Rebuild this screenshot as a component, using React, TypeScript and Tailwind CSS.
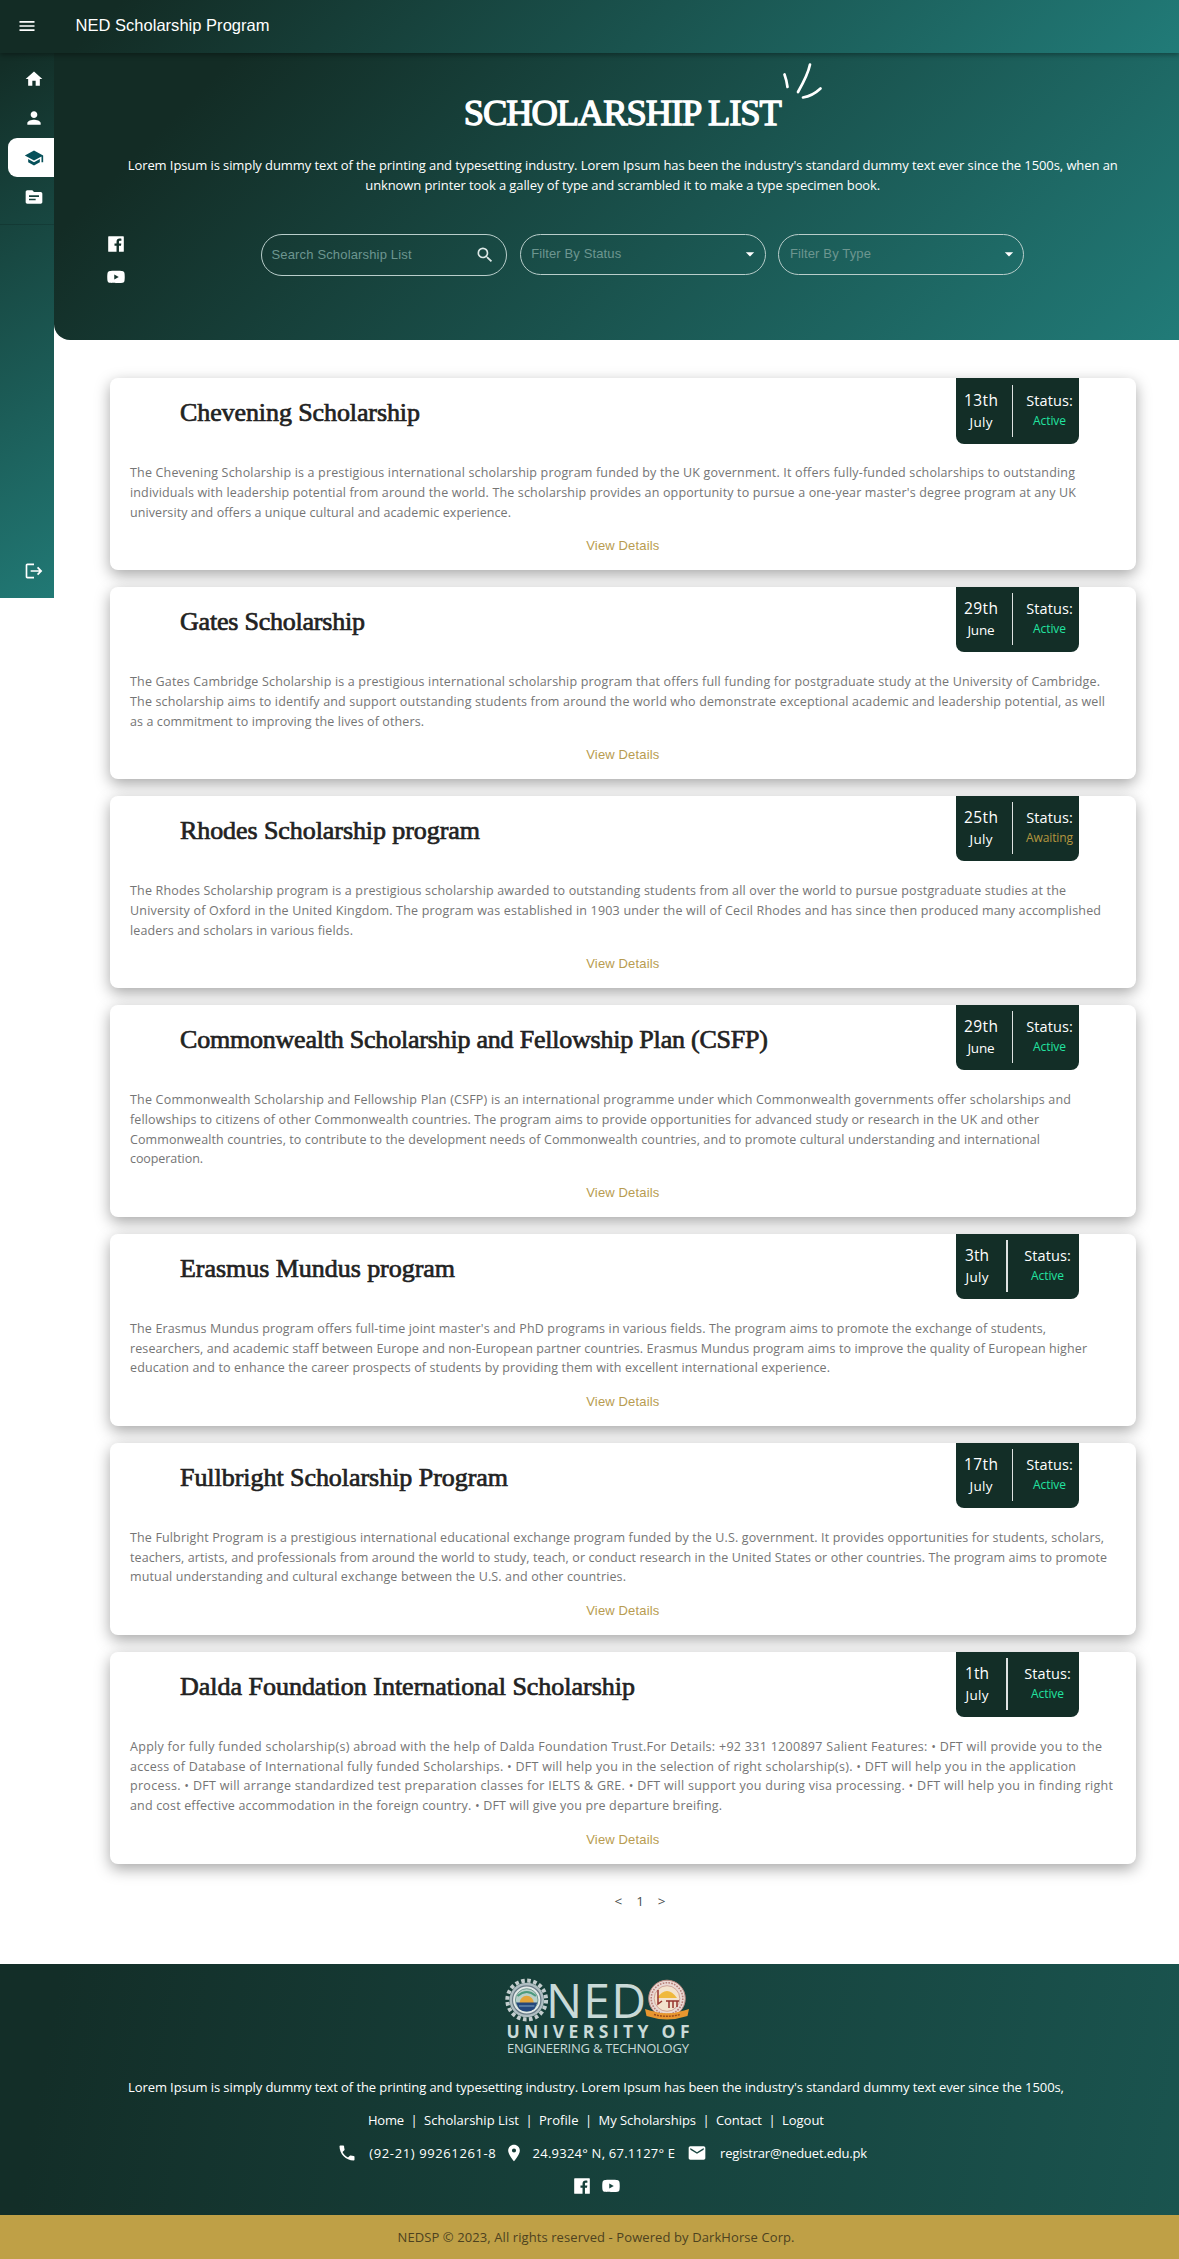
import { useLayoutEffect, useRef, useState } from "react";
import {
  MdArrowDropDown,
  MdEmail,
  MdHome,
  MdLocationOn,
  MdLogout,
  MdMenu,
  MdPerson,
  MdPhone,
  MdSchool,
  MdSearch,
  MdSource,
} from "react-icons/md";
import { AiFillFacebook, AiFillYoutube } from "react-icons/ai";

/** A single line of text whose tracking is adjusted so that it spans `width` pixels. */
function Line({ text, width, className = "" }: { text: string; width: number; className?: string }) {
  const ref = useRef<HTMLSpanElement>(null);
  const [tracking, setTracking] = useState(0);
  useLayoutEffect(() => {
    const el = ref.current;
    if (!el) return;
    el.style.letterSpacing = "0px";
    const natural = el.getBoundingClientRect().width;
    const next = (width - natural) / Math.max(1, text.length - 1);
    el.style.letterSpacing = `${next}px`;
    setTracking(next);
  }, [text, width]);
  return (
    <span className={`block whitespace-nowrap ${className}`} style={{ width }}>
      <span ref={ref} className="inline-block [font-variant-ligatures:none]" style={{ letterSpacing: tracking }}>
        {text}
      </span>
    </span>
  );
}

type Scholarship = {
  title: string;
  titleWidth: number;
  day: string;
  month: string;
  status: "Active" | "Awaiting";
  lines: [string, number][];
};

const scholarships: Scholarship[] = [
  {
    title: "Chevening Scholarship",
    titleWidth: 240,
    day: "13th",
    month: "July",
    status: "Active",
    lines: [
      ["The Chevening Scholarship is a prestigious international scholarship program funded by the UK government. It offers fully-funded scholarships to outstanding", 945],
      ["individuals with leadership potential from around the world. The scholarship provides an opportunity to pursue a one-year master's degree program at any UK", 946],
      ["university and offers a unique cultural and academic experience.", 381],
    ],
  },
  {
    title: "Gates Scholarship",
    titleWidth: 185,
    day: "29th",
    month: "June",
    status: "Active",
    lines: [
      ["The Gates Cambridge Scholarship is a prestigious international scholarship program that offers full funding for postgraduate study at the University of Cambridge.", 970],
      ["The scholarship aims to identify and support outstanding students from around the world who demonstrate exceptional academic and leadership potential, as well", 975],
      ["as a commitment to improving the lives of others.", 294],
    ],
  },
  {
    title: "Rhodes Scholarship program",
    titleWidth: 300,
    day: "25th",
    month: "July",
    status: "Awaiting",
    lines: [
      ["The Rhodes Scholarship program is a prestigious scholarship awarded to outstanding students from all over the world to pursue postgraduate studies at the", 936],
      ["University of Oxford in the United Kingdom. The program was established in 1903 under the will of Cecil Rhodes and has since then produced many accomplished", 971],
      ["leaders and scholars in various fields.", 223],
    ],
  },
  {
    title: "Commonwealth Scholarship and Fellowship Plan (CSFP)",
    titleWidth: 588,
    day: "29th",
    month: "June",
    status: "Active",
    lines: [
      ["The Commonwealth Scholarship and Fellowship Plan (CSFP) is an international programme under which Commonwealth governments offer scholarships and", 941],
      ["fellowships to citizens of other Commonwealth countries. The program aims to provide opportunities for advanced study or research in the UK and other", 909],
      ["Commonwealth countries, to contribute to the development needs of Commonwealth countries, and to promote cultural understanding and international", 910],
      ["cooperation.", 73],
    ],
  },
  {
    title: "Erasmus Mundus program",
    titleWidth: 275,
    day: "3th",
    month: "July",
    status: "Active",
    lines: [
      ["The Erasmus Mundus program offers full-time joint master's and PhD programs in various fields. The program aims to promote the exchange of students,", 916],
      ["researchers, and academic staff between Europe and non-European partner countries. Erasmus Mundus program aims to improve the quality of European higher", 957],
      ["education and to enhance the career prospects of students by providing them with excellent international experience.", 700],
    ],
  },
  {
    title: "Fullbright Scholarship Program",
    titleWidth: 328,
    day: "17th",
    month: "July",
    status: "Active",
    lines: [
      ["The Fulbright Program is a prestigious international educational exchange program funded by the U.S. government. It provides opportunities for students, scholars,", 974],
      ["teachers, artists, and professionals from around the world to study, teach, or conduct research in the United States or other countries. The program aims to promote", 977],
      ["mutual understanding and cultural exchange between the U.S. and other countries.", 496],
    ],
  },
  {
    title: "Dalda Foundation International Scholarship",
    titleWidth: 455,
    day: "1th",
    month: "July",
    status: "Active",
    lines: [
      ["Apply for fully funded scholarship(s) abroad with the help of Dalda Foundation Trust.For Details: +92 331 1200897 Salient Features: • DFT will provide you to the", 972],
      ["access of Database of International fully funded Scholarships. • DFT will help you in the selection of right scholarship(s). • DFT will help you in the application", 946],
      ["process. • DFT will arrange standardized test preparation classes for IELTS & GRE. • DFT will support you during visa processing. • DFT will help you in finding right", 983],
      ["and cost effective accommodation in the foreign country. • DFT will give you pre departure breifing.", 592],
    ],
  },
];

function DateBadge({ item }: { item: Scholarship }) {
  const narrow = item.day.length < 4;
  return (
    <div className="absolute top-0 right-[56.5px] flex h-[65.5px] w-[123px] rounded-b-[8px] bg-[#132e27] pt-[6.5px] text-white">
      <div className={`flex flex-col items-center pt-[4px] ${narrow ? "w-[42px]" : "w-[50px]"}`}>
        <Line text={item.day} width={narrow ? 24 : 34} className="text-[15.5px] leading-[22px]" />
        <Line text={item.month} width={item.month === "June" ? 27 : 23} className="text-[13.5px] leading-[22px]" />
      </div>
      <div className={`h-[52px] w-[1.5px] bg-[#dfe3e2] ${narrow ? "ml-[8px]" : "ml-[5.5px]"}`} />
      <div className={`flex w-[47px] flex-col items-center pt-[6px] ${narrow ? "ml-[16.5px]" : "ml-[13px]"}`}>
        <Line text="Status:" width={46.5} className="text-[14.5px] leading-[20px]" />
        {item.status === "Active" ? (
          <Line text="Active" width={33} className="text-[12px] leading-[19px] font-medium text-[#22e3a0]" />
        ) : (
          <Line text="Awaiting" width={47} className="text-[12px] leading-[19px] font-medium text-[#b3963f]" />
        )}
      </div>
    </div>
  );
}

function Card({ item }: { item: Scholarship }) {
  return (
    <article className="relative rounded-[8px] bg-white px-5 pt-[17px] pb-[14.3px] shadow-[0_5px_15px_rgba(0,0,0,0.35)]">
      <h2 className="pl-[50px] font-['Liberation_Serif',serif] text-[26px] leading-[36px] text-[#222] [-webkit-text-stroke:0.7px_#222]">
        <Line text={item.title} width={item.titleWidth} />
      </h2>
      <div className="pt-[32px] text-[12.5px] leading-[19.8px] text-[#757575]">
        {item.lines.map(([text, width]) => (
          <Line key={text} text={text} width={width} />
        ))}
      </div>
      <div className="flex justify-center pt-[13.8px] font-['Liberation_Sans',sans-serif] text-[13px] leading-[20px] text-[#b89c50]">
        <Line text="View Details" width={73} />
      </div>
      <DateBadge item={item} />
    </article>
  );
}

function UniversityLogo() {
  return (
    <svg width="190" height="94" viewBox="0 0 190 94" className="shrink-0 font-['Open_Sans',sans-serif]" fill="#c9dad8">
      <g transform="translate(0 12)">
        <circle cx="24.7" cy="24" r="19.4" fill="none" stroke="#c3cdce" strokeWidth="4" strokeDasharray="3.6 2.49" />
        <circle cx="24.7" cy="24" r="17.3" fill="#aebdc1" />
        <circle cx="24.7" cy="24" r="14.2" fill="#e2e9e8" stroke="#697b86" strokeWidth="1.2" />
        <circle cx="24.7" cy="24" r="11.3" fill="#b9cfc9" stroke="#5f8d84" strokeWidth="0.8" />
        <path d="M15.5 20q9.2-8 18.4 0" fill="none" stroke="#4d9a7d" strokeWidth="2" />
        <path d="M17.5 27a7.2 7.2 0 0 1 14.4 0z" fill="#e3a53b" />
        <path d="M14 26.5h21.4l-3 6.500q-7.700 5-15.400 0z" fill="#25477c" />
        <path d="M17 30h15.4" stroke="#9cc2d6" strokeWidth="0.8" />
        <circle cx="165" cy="22.500" r="18.3" fill="#ead9d4" stroke="#b98880" strokeWidth="1" />
        <circle cx="165" cy="22.500" r="15.8" fill="none" stroke="#b87f78" strokeWidth="1.6" strokeDasharray="1.6 1.3" />
        <circle cx="165" cy="22.500" r="12.8" fill="#f3e3cd" stroke="#c79489" strokeWidth="0.8" />
        <path d="M155 22q10-14 20 0z" fill="#efb93c" />
        <path d="M156 14v14l4-3M164 25h13M167 25v7m4-7v7m4-7v6" fill="none" stroke="#96332e" strokeWidth="1.5" />
        <path d="M143 33l5 1.500q17 5.500 34 0l5-1.500-1.500 7-4 1q-16.500 5-33 0l-4-1z" fill="#e8962f" />
        <path d="M152 38.500q13 3.500 26 0" fill="none" stroke="#9d4a1c" strokeWidth="1.4" strokeDasharray="2 1" />
      </g>
      <text x="44" y="53.500" fontSize="48" fontWeight="500" textLength="100" lengthAdjust="spacing">
        NED
      </text>
      <text x="4.500" y="74" fontSize="17.500" fontWeight="700" textLength="183" lengthAdjust="spacing">
        UNIVERSITY OF
      </text>
      <text x="5" y="88.700" fontSize="13" fontWeight="500" textLength="182" lengthAdjust="spacing">
        ENGINEERING &amp; TECHNOLOGY
      </text>
    </svg>
  );
}

const footerLinks: [string, number][] = [
  ["Home", 36],
  ["Scholarship List", 95],
  ["Profile", 39.5],
  ["My Scholarships", 97.5],
  ["Contact", 46],
  ["Logout", 42],
];

export default function App() {
  return (
    <div className="flex h-[2259px] w-[1179px] flex-col overflow-hidden bg-white font-['Open_Sans',sans-serif]">
      <header className="relative z-10 flex h-[52.5px] shrink-0 items-center bg-[linear-gradient(135deg,#132c25_10%,#217b78_100%)] pl-[16.5px] text-white shadow-[0_2px_5px_rgba(0,0,0,0.35)]">
        <MdMenu size={20} />
        <Line text="NED Scholarship Program" width={194} className="-mt-[1px] ml-[39px] font-['Liberation_Sans',sans-serif] text-[16.5px]" />
      </header>

      <div className="flex h-[1911.5px] shrink-0 items-start">
        <nav className="flex h-[545.500px] w-[53.500px] shrink-0 flex-col bg-[linear-gradient(150deg,#132e27_2%,#217975_100%)] pt-[7px] text-white">
          <div className="flex h-[165px] flex-col items-end border-b border-black/15">
            <div className="flex h-[39.300px] w-[45.500px] items-center pl-[16px]"><MdHome size={20} /></div>
            <div className="flex h-[39.300px] w-[45.500px] items-center pl-[16px]"><MdPerson size={20} /></div>
            <div className="flex h-[39.300px] w-[45.500px] items-center rounded-l-[9px] bg-white pl-[16px] text-[#06505a]"><MdSchool size={20} /></div>
            <div className="flex h-[39.300px] w-[45.500px] items-center pl-[16px]"><MdSource size={20} /></div>
          </div>
          <div className="mt-auto mb-[17px] ml-[24px]"><MdLogout size={20} /></div>
        </nav>

        <div className="flex min-w-0 grow flex-col">
          <section className="relative flex h-[287px] flex-col rounded-bl-[16px] bg-[linear-gradient(135deg,#132c25_13%,#217b78_100%)] text-white">
            <div className="flex justify-center pt-[36px] pl-[14px]">
              <h1 className="relative -left-[0.500px] font-['Liberation_Serif',serif] text-[36.500px] leading-[48px] [-webkit-text-stroke:1.300px_#fff]">
                <Line text="SCHOLARSHIP LIST" width={318} />
                <svg className="absolute -top-[28px] left-[317px]" width="42" height="40" viewBox="782 62 42 40" fill="none" stroke="#fff" strokeWidth="2.700" strokeLinecap="round">
                  <path d="M785.500 75.500q2.200 6 3 12.500M811 65.500q-2 10-12 27.500M821.500 89.500q-8 7.500-17.500 9" />
                </svg>
              </h1>
            </div>
            <div className="flex flex-col items-center pt-[18px] pl-[14px] pr-[1px] text-[13px] leading-[20px] font-medium">
              <Line text="Lorem Ipsum is simply dummy text of the printing and typesetting industry. Lorem Ipsum has been the industry's standard dummy text ever since the 1500s, when an" width={990} />
              <Line text="unknown printer took a galley of type and scrambled it to make a type specimen book." width={515} />
            </div>
            <div className="flex pt-[39px] pl-[52px]">
              <div className="flex flex-col gap-[13px]">
                <AiFillFacebook size={20} />
                <AiFillYoutube size={20} />
              </div>
              <div className="ml-[135.500px] flex gap-[12.700px] font-['Liberation_Sans',sans-serif] text-[13px] text-[#6d9690]">
                <div className="flex h-[42px] w-[246px] items-center justify-between rounded-[21px] border border-[#b9cecb] pr-[11px] pl-[9.500px]">
                  <Line text="Search Scholarship List" width={140} />
                  <MdSearch size={20} className="text-[#dde9e7]" />
                </div>
                <div className="flex h-[41px] w-[246px] items-center justify-between rounded-[21px] border border-[#b9cecb] pr-[4.500px] pl-[10.500px]">
                  <Line text="Filter By Status" width={90} />
                  <MdArrowDropDown size={20} className="text-white" />
                </div>
                <div className="flex h-[41px] w-[246px] items-center justify-between rounded-[21px] border border-[#b9cecb] pr-[4.500px] pl-[10.500px]">
                  <Line text="Filter By Type" width={81} />
                  <MdArrowDropDown size={20} className="text-white" />
                </div>
              </div>
            </div>
          </section>

          <main className="flex flex-col gap-[16.500px] pt-[38.500px] pr-[43.500px] pl-[56.500px]">
            {scholarships.map((item) => (
              <Card key={item.title} item={item} />
            ))}
          </main>
          <div className="mt-[27px] ml-[56.500px] flex w-[1060px] justify-center gap-[14px] text-[13.500px] leading-[20px] text-[#4a4f4e]">
            <span>&lt;</span>
            <span>1</span>
            <span>&gt;</span>
          </div>
        </div>
      </div>

      <footer className="flex h-[250.500px] shrink-0 flex-col bg-[linear-gradient(100deg,#132e28_5%,#1a544f_100%)] text-[13px] leading-[20px] font-medium text-white">
        <div className="flex h-[94px] pl-[502px]">
          <UniversityLogo />
        </div>
        <Line text="Lorem Ipsum is simply dummy text of the printing and typesetting industry. Lorem Ipsum has been the industry's standard dummy text ever since the 1500s," width={936} className="mt-[19px] ml-[128px]" />
        <div className="mt-[12.500px] ml-[368px] flex">
          {footerLinks.map(([label, width], i) => (
            <div key={label} className="flex">
              {i > 0 && <span className="w-[20px] text-center">|</span>}
              <Line text={label} width={width} />
            </div>
          ))}
        </div>
        <div className="mt-[13px] ml-[337px] flex items-center">
          <MdPhone size={20} />
          <Line text="(92-21) 99261261-8" width={126.500} className="ml-[12.300px]" />
          <MdLocationOn size={20} className="ml-[8.300px]" />
          <Line text="24.9324° N, 67.1127° E" width={142.500} className="ml-[8.500px]" />
          <MdEmail size={20} className="ml-[12px]" />
          <Line text="registrar@neduet.edu.pk" width={147} className="ml-[13px]" />
        </div>
        <div className="mt-[13px] ml-[572px] flex gap-[8.500px]">
          <AiFillFacebook size={20} />
          <AiFillYoutube size={20} />
        </div>
      </footer>
      <div className="flex h-[44.500px] shrink-0 items-center justify-center pt-[1px] pl-[13px] text-[13px] text-[#4d4220] bg-[#bfa046]">
        <Line text="NEDSP © 2023, All rights reserved - Powered by DarkHorse Corp." width={397} />
      </div>
    </div>
  );
}
